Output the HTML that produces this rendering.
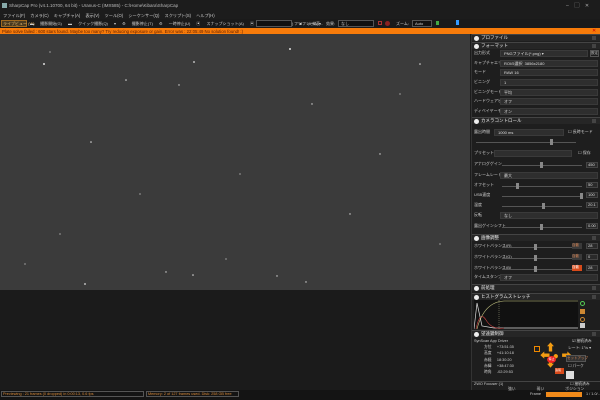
<!DOCTYPE html>
<html><head><meta charset="utf-8"><style>
*{margin:0;padding:0;box-sizing:border-box}
body{width:600px;height:400px;overflow:hidden;background:#1b1b1b;font-family:"Liberation Sans","Noto Sans CJK JP",sans-serif;font-size:4.5px;color:#ddd;position:relative}
.a{position:absolute;white-space:nowrap}
.hdr{position:absolute;left:472px;width:128px;height:7px;background:#262626;border-top:1px solid #444;color:#eee;font-size:4.5px;line-height:6px;padding-left:9px}
.hdr:before{content:"";position:absolute;left:2px;top:1px;width:5px;height:5px;border-radius:50%;background:#eee}
.hdr:after{content:"";position:absolute;right:4px;top:1px;width:4px;height:4px;background:#444}
.lbl{position:absolute;left:474px;font-size:4px;color:#ccc;line-height:6px}
.dd{position:absolute;left:500px;width:98px;height:7px;background:#2e2e2e;border:1px solid #3a3a3a;font-size:4px;line-height:5px;padding-left:3px;color:#ddd}
.sl{position:absolute;left:502px;width:80px;height:1px;background:#555}
.knob{position:absolute;width:3px;height:6px;background:#888;top:-3px}
.val{position:absolute;left:586px;width:12px;height:6px;background:#2a2a2a;border:1px solid #444;font-size:4px;line-height:4px;color:#ddd;padding-left:1px}
</style></head><body>
<div class="a" style="left:0;top:0;width:600px;height:12px;background:#1c1c1c"></div>
<div class="a" style="left:2px;top:3px;width:5px;height:5px;background:#8aa"></div>
<div class="a" style="left:9px;top:3px;font-size:4.5px;color:#bbb">SharpCap Pro (v4.1.10700, 64 bit) - Uranus-C (IMX585) - C:\Home\Kibara\SharpCap</div>
<div class="a" style="left:566px;top:2px;font-size:5px;color:#aaa">–&nbsp;&nbsp;&nbsp;&nbsp;▢&nbsp;&nbsp;&nbsp;&nbsp;✕</div>
<div class="a" style="left:0;top:12px;width:600px;height:7px;background:#1c1c1c"></div>
<div class="a" style="left:3px;top:13px;font-size:4.2px;color:#ccc;word-spacing:4px">ファイル(F) カメラ(C) キャプチャ(A) 表示(V) ツール(O) シーケンサー(Q) スクリプト(S) ヘルプ(H)</div>
<div class="a" style="left:0;top:19px;width:600px;height:9px;background:#1a1a1a"></div>
<div class="a" style="left:1px;top:20px;width:26px;height:7px;background:#4a3a20;border:1px solid #a06a20"></div>
<div class="a" style="left:3px;top:21px;font-size:4px;color:#f0c070">ライブビュー (W)</div>
<div class="a" style="left:30px;top:21px;font-size:4px;color:#ccc;word-spacing:5px">▬ 撮影開始(G) ▬ クイック撮影(Q) ▾ ⚙ 撮影停止(T) ⚙ 一時停止(U) ▣ スナップショット(A) ▣ ライブスタック(K) ■ 火来表...</div>
<div class="a" style="left:256px;top:20px;width:36px;height:7px;background:#111;border:1px solid #555"></div>
<div class="a" style="left:294px;top:21px;font-size:4px;color:#ccc">フツフレーム ▾</div>
<div class="a" style="left:326px;top:21px;font-size:4px;color:#ccc">効果:</div>
<div class="a" style="left:338px;top:20px;width:36px;height:7px;background:#111;border:1px solid #555;font-size:4px;padding-left:2px;color:#ccc">なし</div>
<div class="a" style="left:378px;top:21px;width:4px;height:4px;border:1px solid #a33"></div>
<div class="a" style="left:385px;top:21px;width:5px;height:5px;border-radius:50%;background:#822"></div>
<div class="a" style="left:396px;top:21px;font-size:4px;color:#ccc">ズーム:</div>
<div class="a" style="left:412px;top:20px;width:20px;height:7px;background:#111;border:1px solid #555;font-size:4px;padding-left:2px;color:#ccc">Auto</div>
<div class="a" style="left:436px;top:21px;width:3px;height:4px;background:#4a4"></div>
<div class="a" style="left:456px;top:20px;width:3px;height:5px;background:#39f"></div>
<div class="a" style="left:0;top:28px;width:600px;height:6px;background:#f77b0a"></div>
<div class="a" style="left:2px;top:28.5px;font-size:4.3px;color:#5a1d00">Plate solve failed : 600 stars found. Maybe too many? Try reducing exposure or gain. Error was : 22:05:49 No solution found! :)</div>
<div class="a" style="left:592px;top:27.5px;font-size:5px;color:#c00">✕</div>
<svg class="a" style="left:0;top:34px" width="470" height="256">
<rect width="470" height="256" fill="#3b3b3b"/>
<g fill="#ddd">
<circle cx="44" cy="30" r="1"/><circle cx="194" cy="28" r="0.9"/><circle cx="126" cy="46" r="0.8"/><circle cx="290" cy="15" r="1"/><circle cx="179" cy="51" r="0.7"/><circle cx="91" cy="108" r="0.8"/><circle cx="50" cy="18" r="0.6"/><circle cx="312" cy="70" r="0.7"/><circle cx="420" cy="30" r="0.8"/><circle cx="380" cy="120" r="0.7"/><circle cx="240" cy="140" r="0.6"/><circle cx="85" cy="250" r="0.9"/><circle cx="166" cy="238" r="0.7"/><circle cx="193" cy="241" r="0.8"/><circle cx="277" cy="242" r="0.7"/><circle cx="306" cy="248" r="0.7"/><circle cx="60" cy="200" r="0.6"/><circle cx="140" cy="160" r="0.6"/><circle cx="350" cy="180" r="0.7"/><circle cx="440" cy="210" r="0.6"/><circle cx="25" cy="230" r="0.6"/><circle cx="400" cy="60" r="0.6"/><circle cx="226" cy="225" r="0.6"/>
</g></svg>
<div class="a" style="left:0;top:390px;width:600px;height:10px;background:#141414"></div>
<div class="a" style="left:1px;top:391px;width:143px;height:6px;border:1px solid #555;font-size:3.8px;color:#d88a3a;padding-left:1px;line-height:4px">Previewing : 21 frames (0 dropped) in 0:00:13, 0.6 fps</div>
<div class="a" style="left:146px;top:391px;width:93px;height:6px;border:1px solid #555;font-size:3.8px;color:#d88a3a;padding-left:1px;line-height:4px">Memory: 2 of 127 frames used. Disk: 258 GB free</div>
<div class="a" style="left:471px;top:34px;width:129px;height:356px;background:#1e1e1e;border-left:1px solid #333"></div>
<div class="hdr" style="top:34px">プロファイル</div>
<div class="hdr" style="top:42px">フォーマット</div>
<div class="lbl" style="top:50px">出力形式</div><div class="dd" style="top:50px;width:88px">PNGファイル(*.png) ▾</div><div class="a" style="left:590px;top:50px;width:9px;height:7px;border:1px solid #555;font-size:3.5px;color:#ccc">設定</div>
<div class="lbl" style="top:60px">キャプチャエリア</div><div class="dd" style="top:60px">ROI/5選択 &nbsp;3856x2180</div>
<div class="lbl" style="top:69px">モード</div><div class="dd" style="top:69px">RAW 16</div>
<div class="lbl" style="top:79px">ビニング</div><div class="dd" style="top:79px">1</div>
<div class="lbl" style="top:89px">ビニングモード</div><div class="dd" style="top:89px">平均</div>
<div class="lbl" style="top:98px">ハードウェアビニング</div><div class="dd" style="top:98px">オフ</div>
<div class="lbl" style="top:108px">ディベイヤーモード</div><div class="dd" style="top:108px">オン</div>
<div class="hdr" style="top:117px">カメラコントロール</div>
<div class="lbl" style="top:129px">露出時間</div><div class="dd" style="top:129px;left:494px;width:70px">1000 ms</div><div class="lbl" style="top:129px;left:568px">☐ 長時モード</div>
<div class="sl" style="top:142px;left:476px;width:100px"><div class="knob" style="left:74px"></div></div>
<div class="lbl" style="top:150px">プリセット</div><div class="dd" style="top:150px;left:494px;width:78px"></div><div class="lbl" style="top:150px;left:578px">☐ 保存</div>
<div class="lbl" style="top:161px">アナログゲイン</div><div class="sl" style="top:165px"><div class="knob" style="left:38px"></div></div><div class="val" style="top:162px">450</div>
<div class="lbl" style="top:172px">フレームレート</div><div class="dd" style="top:172px">最大</div>
<div class="lbl" style="top:182px">オフセット</div><div class="sl" style="top:186px"><div class="knob" style="left:14px"></div></div><div class="val" style="top:182px">50</div>
<div class="lbl" style="top:192px">USB速度</div><div class="sl" style="top:196px"><div class="knob" style="left:78px"></div></div><div class="val" style="top:192px">100</div>
<div class="lbl" style="top:202px">温度</div><div class="sl" style="top:206px"><div class="knob" style="left:40px"></div></div><div class="val" style="top:202px">20.1</div>
<div class="lbl" style="top:212px">反転</div><div class="dd" style="top:212px">なし</div>
<div class="lbl" style="top:223px">露出ゲインシフト</div><div class="sl" style="top:227px"><div class="knob" style="left:38px"></div></div><div class="val" style="top:223px">0.00</div>
<div class="hdr" style="top:234px">画像調整</div>
<div class="lbl" style="top:243px">ホワイトバランス(R)</div><div class="sl" style="top:247px;width:70px"><div class="knob" style="left:32px"></div></div><div class="a" style="left:572px;top:243px;width:10px;height:6px;background:#3a3a3a;font-size:3.5px;color:#d85">自動</div><div class="val" style="top:243px">28</div>
<div class="lbl" style="top:254px">ホワイトバランス(G)</div><div class="sl" style="top:258px;width:70px"><div class="knob" style="left:32px"></div></div><div class="a" style="left:572px;top:254px;width:10px;height:6px;background:#3a3a3a;font-size:3.5px;color:#d85">自動</div><div class="val" style="top:254px">0</div>
<div class="lbl" style="top:265px">ホワイトバランス(B)</div><div class="sl" style="top:269px;width:70px"><div class="knob" style="left:32px"></div></div><div class="a" style="left:572px;top:265px;width:10px;height:6px;background:#d84a1a;font-size:3.5px;color:#fff">自動</div><div class="val" style="top:265px">28</div>
<div class="lbl" style="top:274px">タイムスタンプ</div><div class="dd" style="top:274px">オフ</div>
<div class="hdr" style="top:284px">前処理</div>
<div class="hdr" style="top:293px">ヒストグラムストレッチ</div>
<svg class="a" style="left:474px;top:300px" width="104" height="29"><rect width="104" height="29" fill="#111"/><path d="M0 29 L3 3 L8 26 L20 28 L104 28" stroke="#ddd" fill="none" stroke-width="0.7"/><path d="M2 29 Q6 10 12 20 T30 28" stroke="#c44" fill="none" stroke-width="0.6"/><path d="M3 29 Q10 2 30 1 L104 1" stroke="#cc8" fill="none" stroke-width="0.6"/><line x1="25" y1="0" x2="25" y2="29" stroke="#aa8" stroke-dasharray="1,1" stroke-width="0.5"/></svg>
<div class="a" style="left:580px;top:301px;width:5px;height:5px;border-radius:50%;border:1px solid #5c5"></div>
<div class="a" style="left:580px;top:309px;width:5px;height:5px;background:#c83"></div>
<div class="a" style="left:580px;top:317px;width:5px;height:5px;border-radius:50%;border:1px solid #c83"></div>
<div class="a" style="left:580px;top:323px;width:5px;height:5px;background:#ccc"></div>
<div class="hdr" style="top:330px">望遠鏡制御</div>
<div class="lbl" style="top:338px;font-size:3.8px">SynScan App Driver</div><div class="lbl" style="top:338px;left:572px;font-size:3.8px">☑ 接続済み</div>
<div class="lbl" style="top:344px;left:484px;font-size:3.8px;line-height:6.3px;white-space:pre">方位     +73:51:35
高度     +41:10:18
赤経     18:30:20
赤緯     +38:47:30
時角     -02:29:53</div>
<div class="a" style="left:534px;top:346px;width:6px;height:6px;border:1px solid #e80"></div>
<div class="a" style="left:540px;top:345px;font-size:10px;color:#f39c12;line-height:8px;white-space:pre">  ⬆
⬅ ● ➡
  ⬇</div>
<div class="a" style="left:547px;top:356px;width:9px;height:7px;border-radius:50%;background:#e22;font-size:3px;color:#fff;text-align:center;line-height:7px">停止</div>
<div class="a" style="left:555px;top:368px;width:9px;height:6px;background:#d84a1a;font-size:3px;color:#fff">追尾</div>
<div class="lbl" style="top:345px;left:568px;font-size:3.8px">レート: 1°/s ▾</div>
<div class="a" style="left:566px;top:355px;width:20px;height:7px;background:#333;border:1px solid #555;font-size:3.5px;color:#d85">セットアップ</div>
<div class="lbl" style="top:363px;left:568px;font-size:3.8px">☐ パーク</div>
<div class="a" style="left:566px;top:371px;width:8px;height:8px;background:#ddd"></div>
<div class="a" style="left:472px;top:381px;width:128px;height:1px;background:#444"></div>
<div class="lbl" style="top:381px;font-size:3.8px">ZWO Focuser (1)</div><div class="lbl" style="top:381px;left:570px;font-size:3.8px">☐ 接続済み</div>
<div class="lbl" style="top:386px;left:508px;font-size:3.8px;word-spacing:20px">強い 弱い ポジション</div>
<div class="lbl" style="top:391px;left:530px;font-size:3.8px">Frame</div>
<div class="a" style="left:546px;top:392px;width:36px;height:5px;background:#f08a1a"></div>
<div class="lbl" style="top:391px;left:586px;font-size:3.8px">1 / 1.0/..</div>
</body></html>
